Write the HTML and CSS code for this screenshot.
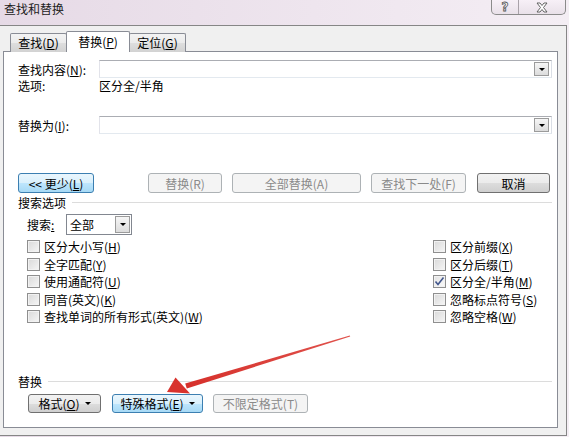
FILE: index.html
```html
<!DOCTYPE html>
<html lang="zh-CN">
<head>
    <meta charset="UTF-8">
    <title>查找和替换</title>
    <link rel="stylesheet" href="styles.css">
</head>
<body>
    <div class="titlebar">
        <span class="title">查找和替换</span>
        <div class="caption">
            <span class="cap-btn cap-help">?</span>
            <span class="cap-btn cap-close">
                <svg width="12" height="11" viewBox="0 0 12 11">
                    <path d="M1 1 L4 1 L6 3.5 L8 1 L11 1 L7.5 5.5 L11 10 L8 10 L6 7.5 L4 10 L1 10 L4.5 5.5 Z" fill="#fff" stroke="#555" stroke-width="0.9"/>
                </svg>
            </span>
        </div>
    </div>

    <div class="frame">
        <div class="tabs">
            <div class="tab">查找(<u>D</u>)</div>
            <div class="tab active">替换(<u>P</u>)</div>
            <div class="tab">定位(<u>G</u>)</div>
        </div>

        <div class="panel">
            <div class="field-row">
                <span class="label">查找内容(<u>N</u>):</span>
                <div class="combo"><span class="drop"></span></div>
            </div>
            <div class="option-row">
                <span class="label">选项:</span>
                <span>区分全/半角</span>
            </div>
            <div class="field-row replace-row">
                <span class="label">替换为(<u>I</u>):</span>
                <div class="combo"><span class="drop"></span></div>
            </div>

            <div class="btn-row">
                <button class="btn btn-blue w-less"><span>&lt;&lt; 更少(<u>L</u>)</span></button>
                <button class="btn disabled w-replace" disabled><span>替换(R)</span></button>
                <button class="btn disabled w-all" disabled><span>全部替换(A)</span></button>
                <button class="btn disabled w-next" disabled><span>查找下一处(F)</span></button>
                <button class="btn w-cancel"><span>取消</span></button>
            </div>

            <div class="group-title">搜索选项</div>
            <div class="search-row">
                <span class="search-label">搜索<u>:</u></span>
                <div class="select">全部<span class="drop"></span></div>
            </div>

            <div class="checks">
                <div class="check-col left-col">
                    <label class="check"><span class="box"></span>区分大小写(<u>H</u>)</label>
                    <label class="check"><span class="box"></span>全字匹配(<u>Y</u>)</label>
                    <label class="check"><span class="box"></span>使用通配符(<u>U</u>)</label>
                    <label class="check"><span class="box"></span>同音(英文)(<u>K</u>)</label>
                    <label class="check"><span class="box"></span>查找单词的所有形式(英文)(<u>W</u>)</label>
                </div>
                <div class="check-col">
                    <label class="check"><span class="box"></span>区分前缀(<u>X</u>)</label>
                    <label class="check"><span class="box"></span>区分后缀(<u>T</u>)</label>
                    <label class="check"><span class="box checked"><svg width="11" height="11" viewBox="0 0 11 11"><polyline points="1.5,5.5 4,8.5 9.5,1.5" fill="none" stroke="#42568c" stroke-width="1.6"/></svg></span>区分全/半角(<u>M</u>)</label>
                    <label class="check"><span class="box"></span>忽略标点符号(<u>S</u>)</label>
                    <label class="check"><span class="box"></span>忽略空格(<u>W</u>)</label>
                </div>
            </div>

            <div class="group-title replace-title">替换</div>
            <div class="btn-row bottom-row">
                <button class="btn w-format"><span>格式(<u>O</u>)</span><span class="caret"></span></button>
                <button class="btn btn-blue w-special"><span>特殊格式(<u>E</u>)</span><span class="caret"></span></button>
                <button class="btn disabled w-noformat" disabled><span>不限定格式(T)</span></button>
            </div>
        </div>
    </div>

    <!-- red pointer drawn over the dialog -->
    <svg class="pointer" width="569" height="437" viewBox="0 0 569 437">
        <defs>
            <linearGradient id="red" x1="0" y1="0" x2="1" y2="0">
                <stop offset="0" stop-color="#d6302b"/>
                <stop offset="1" stop-color="#e0524c"/>
            </linearGradient>
        </defs>
        <polygon points="186.8,388.4 185.2,383.6 349.8,335.6 350.2,336.6" fill="url(#red)"/>
        <polygon points="167,392 175.5,377.5 190,393.5" fill="#d8322d"/>
    </svg>
</body>
</html>
```

FILE: styles.css
```css
/* Window chrome */
body {
    margin: 0;
    width: 569px;
    height: 437px;
    overflow: hidden;
    position: relative;
    background: linear-gradient(to right, #e6dae6, #eee5ee 55%, #f4eef4);
    font-family: "Noto Sans CJK SC", "Noto Sans", sans-serif;
    font-size: 12px;
    color: #000;
}
u {
    text-decoration: underline;
    text-underline-offset: 1px;
}
.titlebar {
    height: 25px;
    display: flex;
    justify-content: space-between;
    align-items: flex-start;
}
.title {
    padding-left: 4px;
    line-height: 18px;
    color: #1c1c1c;
}
.caption {
    display: flex;
    margin-right: 3px;
    height: 15px;
    border: 1px solid #8b8b8b;
    border-top: none;
    border-radius: 0 0 5px 5px;
    background: linear-gradient(#f7f0f7, #e9e1e9);
    box-sizing: border-box;
}
.cap-btn {
    display: flex;
    justify-content: center;
    align-items: center;
    height: 14px;
}
.cap-help {
    width: 26px;
    border-right: 1px solid #a9a2a9;
    font-family: "DejaVu Sans", sans-serif;
    font-weight: bold;
    font-size: 12px;
    color: #fff;
    -webkit-text-stroke: 0.8px #555;
}
.cap-close {
    width: 46px;
}

/* Dialog body */
.frame {
    box-sizing: border-box;
    width: 567px;
    height: 411px;
    border: 1px solid #868686;
    border-left: none;
    background: #f0f0f0;
    padding: 5px 8px 0 3px;
}
.tabs {
    display: flex;
    align-items: flex-end;
    height: 21px;
    padding-left: 7px;
    margin-bottom: -1px;
    position: relative;
    z-index: 1;
}
.tab {
    box-sizing: border-box;
    height: 19px;
    border: 1px solid #898c95;
    border-bottom: none;
    border-radius: 2px 2px 0 0;
    background: linear-gradient(#f3f3f3, #ebebeb 50%, #dedede 50%, #d2d2d2);
    text-align: center;
    line-height: 17px;
}
.tab:nth-child(1) { width: 57px; }
.tab:nth-child(2) { width: 64px; margin-left: -1px; }
.tab:nth-child(3) { width: 57px; margin-left: -1px; }
.tab.active {
    height: 21px;
    background: #fff;
    line-height: 19px;
}
.panel {
    box-sizing: border-box;
    height: 377px;
    border: 1px solid #898c95;
    background: #fff;
    padding: 8px 5px 0 14px;
}

/* Find / replace fields */
.field-row {
    display: flex;
    align-items: center;
    height: 18px;
}
.replace-row {
    margin-top: 22px;
}
.label {
    width: 81px;
    flex-shrink: 0;
}
.combo {
    flex: 1;
    box-sizing: border-box;
    height: 18px;
    border: 1px solid #abadb3;
    border-color: #abadb3 #dbdfe6 #e3e9ef #e2e3ea;
    display: flex;
    justify-content: flex-end;
    align-items: center;
    padding-right: 2px;
}
.drop {
    box-sizing: border-box;
    width: 15px;
    height: 14px;
    border: 1px solid #9b9b9b;
    background: linear-gradient(#f6f6f6, #dcdcdc);
    display: flex;
    justify-content: center;
    align-items: center;
}
.drop::after {
    content: "";
    border-left: 3px solid transparent;
    border-right: 3px solid transparent;
    border-top: 3px solid #000;
}
.option-row {
    display: flex;
    height: 16px;
    line-height: 16px;
}

/* Buttons */
.btn-row {
    display: flex;
    height: 20px;
    margin-top: 39px;
}
.btn {
    box-sizing: border-box;
    height: 100%;
    padding: 0;
    border: 1px solid #707070;
    border-radius: 3px;
    background: linear-gradient(#f2f2f2, #ebebeb 50%, #dddddd 50%, #cfcfcf);
    font-family: inherit;
    font-size: 12px;
    color: #000;
    display: flex;
    justify-content: center;
    align-items: center;
    gap: 5px;
}
.btn-blue {
    border-color: #3c7fb1;
    background: linear-gradient(#eaf6fd, #d9f0fc 50%, #bee6fd 50%, #a7d9f5);
}
.btn.disabled {
    border-color: #adb2b5;
    background: #f4f4f4;
    color: #8a8a8a;
}
.w-less { width: 76px; }
.w-replace { width: 74px; margin-left: 54px; }
.w-all { width: 129px; margin-left: 10px; }
.w-next { width: 95px; margin-left: 10px; }
.w-cancel { width: 73px; margin-left: 11px; }
.caret {
    border-left: 3px solid transparent;
    border-right: 3px solid transparent;
    border-top: 3px solid #000;
}

/* Group headings */
.group-title {
    display: flex;
    align-items: center;
    height: 16px;
    margin-top: 1px;
}
.group-title::after {
    content: "";
    flex: 1;
    margin-left: 6px;
    border-top: 1px solid #dcdcdc;
}
.replace-title {
    margin-top: 48px;
}

/* Search options */
.search-row {
    display: flex;
    align-items: center;
    height: 21px;
    margin-top: 4px;
    padding-left: 9px;
}
.search-label {
    width: 39px;
}
.select {
    box-sizing: border-box;
    width: 66px;
    height: 21px;
    border: 1px solid #828790;
    display: flex;
    align-items: center;
    justify-content: space-between;
    padding: 0 1px 0 3px;
}
.select .drop {
    height: 17px;
}
.checks {
    display: flex;
    margin-top: 3px;
    padding-left: 9px;
}
.check-col {
    display: flex;
    flex-direction: column;
}
.left-col {
    width: 406px;
}
.check {
    display: flex;
    align-items: center;
    height: 17.5px;
}
.box {
    box-sizing: border-box;
    width: 13px;
    height: 13px;
    margin-right: 4px;
    border: 1px solid #8f8f8f;
    background: linear-gradient(135deg, #d9d9d9, #f6f6f6);
    box-shadow: inset 0 0 0 1px #f2f2f2;
    display: flex;
    justify-content: center;
    align-items: center;
}
.box.checked {
    background: linear-gradient(135deg, #e2e2e2, #fbfbfb);
}

/* Replace format buttons */
.bottom-row {
    height: 19px;
    margin-top: 4px;
    padding-left: 10px;
}
.w-format { width: 73px; }
.w-special { width: 91px; margin-left: 11px; }
.w-noformat { width: 95px; margin-left: 10px; }

.pointer {
    position: absolute;
    left: 0;
    top: 0;
    pointer-events: none;
}
```
